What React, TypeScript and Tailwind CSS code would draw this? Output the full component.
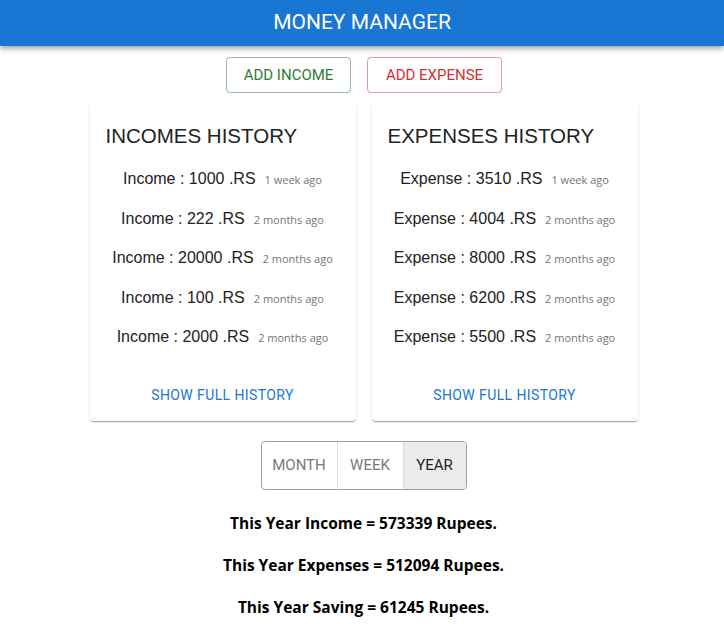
const incomes = [
  { amount: 1000, ago: "1 week ago" },
  { amount: 222, ago: "2 months ago" },
  { amount: 20000, ago: "2 months ago" },
  { amount: 100, ago: "2 months ago" },
  { amount: 2000, ago: "2 months ago" },
];

const expenses = [
  { amount: 3510, ago: "1 week ago" },
  { amount: 4004, ago: "2 months ago" },
  { amount: 8000, ago: "2 months ago" },
  { amount: 6200, ago: "2 months ago" },
  { amount: 5500, ago: "2 months ago" },
];

function HistoryCard({ title, label, items }: { title: string; label: string; items: { amount: number; ago: string }[] }) {
  return (
    <div className="flex w-[266px] flex-col rounded-[4px] bg-white pt-[21px] shadow-[0_2px_1px_-1px_rgba(0,0,0,0.2),0_1px_1px_0_rgba(0,0,0,0.14),0_1px_3px_0_rgba(0,0,0,0.12)]">
      <h2 className="h-[26px] px-4 font-[family-name:'Liberation_Sans',Arial,sans-serif] text-[20.5px] leading-[26px] text-[#222]">
        {title}
      </h2>
      <ul className="mt-[20px] flex flex-col gap-[19.5px]">
        {items.map((item, i) => (
          <li key={i} className="flex h-5 items-baseline justify-center leading-5">
            <span className="font-[family-name:'Liberation_Sans',Arial,sans-serif] text-[16px] text-[#222]">
              {label} : {item.amount} .RS
            </span>
            <span className="ml-[9px] font-[family-name:'Open_Sans',sans-serif] text-[11px] text-[#757575]">{item.ago}</span>
          </li>
        ))}
      </ul>
      <div className="mt-[30px] flex justify-center pb-2">
        <button className="h-9 px-2 font-[family-name:Roboto,sans-serif] text-[14px] tracking-[0.4px] text-[#1976d2]">
          SHOW FULL HISTORY
        </button>
      </div>
    </div>
  );
}

export default function App() {
  return (
    <div className="min-h-[624px] bg-white font-[family-name:Roboto,sans-serif]">
      <header className="relative z-10 flex h-[46px] items-center justify-center bg-[#1976d2] shadow-[0_2px_4px_-1px_rgba(0,0,0,0.2),0_4px_5px_0_rgba(0,0,0,0.14),0_1px_10px_0_rgba(0,0,0,0.12)]">
        <h1 className="text-[21px] font-normal text-white">MONEY MANAGER</h1>
      </header>

      <div className="mt-[11px] flex justify-center gap-4 pl-1">
        <button className="h-9 w-[125px] rounded-[4px] border border-[rgba(46,125,50,0.5)] text-[15px] text-[#2e7d32]">
          ADD INCOME
        </button>
        <button className="h-9 w-[135px] rounded-[4px] border border-[rgba(211,47,47,0.5)] text-[15px] text-[#d32f2f]">
          ADD EXPENSE
        </button>
      </div>

      <div className="mt-[9px] flex justify-center gap-4 pl-[3px]">
        <HistoryCard title="INCOMES HISTORY" label="Income" items={incomes} />
        <HistoryCard title="EXPENSES HISTORY" label="Expense" items={expenses} />
      </div>

      <div className="mt-5 flex justify-center pl-[3px]">
        <div className="flex h-[49px] overflow-hidden rounded-[4px] border border-[#9e9e9e] text-[15px]">
          <button className="w-[76px] border-r border-[#dcdcdc] text-[#7a7a7a]">MONTH</button>
          <button className="w-[66px] border-r border-[#dcdcdc] text-[#7a7a7a]">WEEK</button>
          <button className="w-[62px] bg-[#ebebeb] text-[#222]">YEAR</button>
        </div>
      </div>

      <div className="mt-[23px] flex flex-col items-center gap-[21px] pl-[3px] font-[family-name:'Open_Sans',sans-serif] text-[15.5px] font-bold text-black">
        <p className="h-[21px] leading-[21px]">This Year Income = 573339 Rupees.</p>
        <p className="h-[21px] leading-[21px]">This Year Expenses = 512094 Rupees.</p>
        <p className="h-[21px] leading-[21px]">This Year Saving = 61245 Rupees.</p>
      </div>
    </div>
  );
}
